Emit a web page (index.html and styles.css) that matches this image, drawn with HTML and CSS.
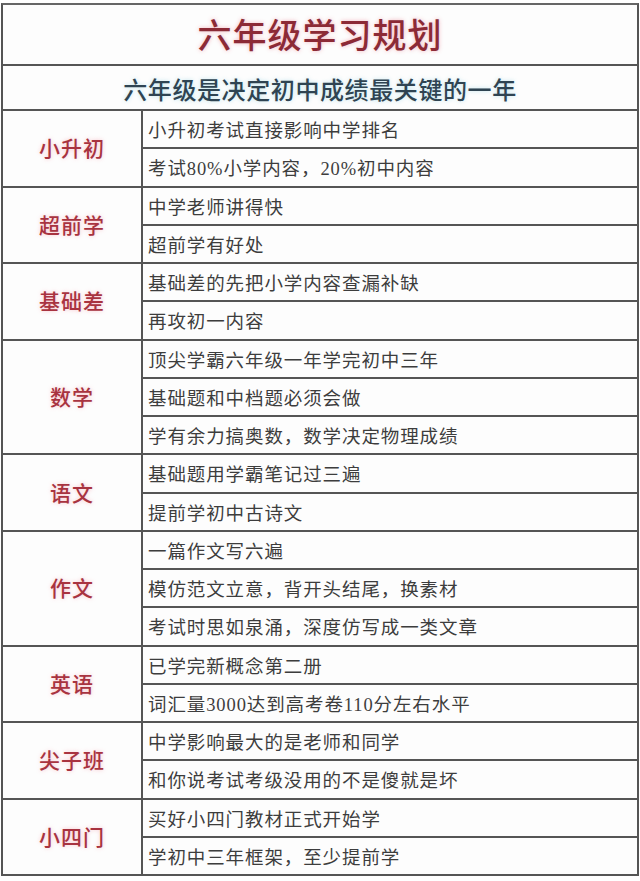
FILE: index.html
```html
<!DOCTYPE html>
<html lang="zh-CN">
<head>
<meta charset="utf-8">
<title>六年级学习规划</title>
<link rel="stylesheet" href="styles.css">
</head>
<body>
<div class="sheet">
  <div class="title">六年级学习规划</div>
  <div class="subtitle">六年级是决定初中成绩最关键的一年</div>

  <div class="group rows2">
    <div class="label">小升初</div>
    <div class="items">
      <div class="item">小升初考试直接影响中学排名</div>
      <div class="item">考试80%小学内容，20%初中内容</div>
    </div>
  </div>

  <div class="group rows2">
    <div class="label">超前学</div>
    <div class="items">
      <div class="item">中学老师讲得快</div>
      <div class="item">超前学有好处</div>
    </div>
  </div>

  <div class="group rows2">
    <div class="label">基础差</div>
    <div class="items">
      <div class="item">基础差的先把小学内容查漏补缺</div>
      <div class="item">再攻初一内容</div>
    </div>
  </div>

  <div class="group rows3">
    <div class="label">数学</div>
    <div class="items">
      <div class="item">顶尖学霸六年级一年学完初中三年</div>
      <div class="item">基础题和中档题必须会做</div>
      <div class="item">学有余力搞奥数，数学决定物理成绩</div>
    </div>
  </div>

  <div class="group rows2">
    <div class="label">语文</div>
    <div class="items">
      <div class="item">基础题用学霸笔记过三遍</div>
      <div class="item">提前学初中古诗文</div>
    </div>
  </div>

  <div class="group rows3">
    <div class="label">作文</div>
    <div class="items">
      <div class="item">一篇作文写六遍</div>
      <div class="item">模仿范文立意，背开头结尾，换素材</div>
      <div class="item">考试时思如泉涌，深度仿写成一类文章</div>
    </div>
  </div>

  <div class="group rows2">
    <div class="label">英语</div>
    <div class="items">
      <div class="item">已学完新概念第二册</div>
      <div class="item">词汇量3000达到高考卷110分左右水平</div>
    </div>
  </div>

  <div class="group rows2">
    <div class="label">尖子班</div>
    <div class="items">
      <div class="item">中学影响最大的是老师和同学</div>
      <div class="item">和你说考试考级没用的不是傻就是坏</div>
    </div>
  </div>

  <div class="group rows2 last">
    <div class="label">小四门</div>
    <div class="items">
      <div class="item">买好小四门教材正式开始学</div>
      <div class="item">学初中三年框架，至少提前学</div>
    </div>
  </div>
</div>
</body>
</html>
```

FILE: styles.css
```css
html, body {
  margin: 0;
  padding: 0;
  background: #ffffff;
}

body {
  width: 640px;
  height: 881px;
  overflow: hidden;
  font-family: "Liberation Serif", "Noto Sans CJK SC", serif;
}

.sheet {
  margin: 3px 0 0 1px;
  width: 638px;
  box-sizing: border-box;
  border: 2px solid #555555;
  border-top-color: #666666;
  background: #fdfdfd;
  display: flex;
  flex-direction: column;
}

.title {
  height: 61px;
  flex: none;
  box-sizing: border-box;
  display: flex;
  align-items: center;
  justify-content: center;
  padding-bottom: 2px;
  border-bottom: 2px solid #555555;
  font-family: "Noto Sans CJK SC", sans-serif;
  font-size: 34px;
  font-weight: 500;
  letter-spacing: 1px;
  color: #8c2a36;
  text-shadow: 0 0 4px rgba(230, 90, 110, 0.45);
}

.subtitle {
  height: 45px;
  flex: none;
  box-sizing: border-box;
  display: flex;
  align-items: center;
  justify-content: center;
  padding-top: 2px;
  border-bottom: 2px solid #555555;
  font-family: "Noto Sans CJK SC", sans-serif;
  font-size: 24px;
  font-weight: 500;
  letter-spacing: 0.6px;
  color: #2f4452;
  text-shadow: 0 0 4px rgba(120, 200, 220, 0.45);
}

.group {
  display: flex;
  flex: none;
  box-sizing: border-box;
  border-bottom: 2px solid #555555;
}

.group.last {
  border-bottom: none;
  height: 74.5px;
}

.rows2 {
  height: 76.5px;
}

.rows3 {
  height: 114.75px;
}

.label {
  width: 140px;
  flex: none;
  box-sizing: border-box;
  border-right: 2px solid #555555;
  display: flex;
  align-items: center;
  justify-content: center;
  padding-bottom: 2px;
  font-family: "Noto Sans CJK SC", sans-serif;
  font-size: 21px;
  font-weight: 500;
  letter-spacing: 1px;
  color: #a83340;
  text-shadow: 0 0 4px rgba(240, 110, 130, 0.4);
}

.items {
  flex: 1;
  display: flex;
  flex-direction: column;
}

.item {
  flex: 1;
  display: flex;
  align-items: center;
  padding-left: 5px;
  font-size: 18.5px;
  letter-spacing: 0.9px;
  color: #3d3d3d;
  border-bottom: 2px solid #555555;
}

.item:last-child {
  border-bottom: none;
}
```
